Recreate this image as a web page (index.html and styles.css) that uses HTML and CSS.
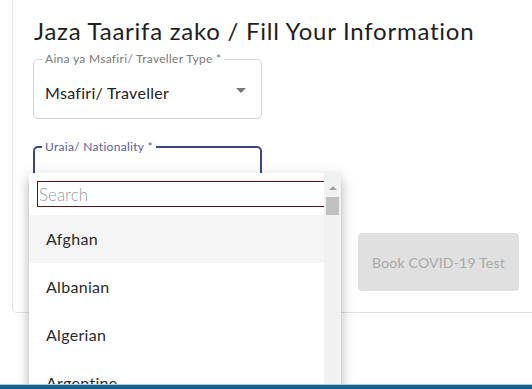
FILE: index.html
```html
<!DOCTYPE html>
<html lang="en">
<head>
  <meta charset="UTF-8">
  <meta name="viewport" content="width=device-width, initial-scale=1.0">
  <title>Fill Your Information</title>
  <link rel="stylesheet" href="styles.css">
</head>
<body>
  <div class="card">
    <h2 class="title">Jaza Taarifa zako / Fill Your Information</h2>
    <form class="form">
      <fieldset class="field">
        <legend>Aina ya Msafiri/ Traveller Type *</legend>
        <div class="value">Msafiri/ Traveller</div>
        <span class="arrow"></span>
      </fieldset>
      <fieldset class="field focused">
        <legend>Uraia/ Nationality *</legend>
        <div class="value"></div>
      </fieldset>
      <button type="button" class="book" disabled>Book COVID-19 Test</button>
    </form>
  </div>

  <!-- dropdown menu for nationality -->
  <div class="menu">
    <div class="menu-list">
      <div class="search-wrap">
        <input class="search" type="text" placeholder="Search">
      </div>
      <ul class="options">
        <li class="active">Afghan</li>
        <li>Albanian</li>
        <li>Algerian</li>
        <li>Argentine</li>
      </ul>
    </div>
    <div class="scrollbar">
      <span class="scroll-up"></span>
      <span class="thumb"></span>
    </div>
  </div>

  <div class="footer"></div>
</body>
</html>
```

FILE: styles.css
```css
* {
  margin: 0;
  padding: 0;
  box-sizing: border-box;
}
html, body {
  overflow: hidden;
}
body {
  font-family: Lato, "Noto Sans", sans-serif;
  color: #222;
  background: #fff;
  height: 389px;
}
.card {
  margin-left: 12px;
  width: 600px;
  border: 1px solid #e2e2e2;
  border-top: none;
  border-radius: 0 0 0 5px;
  padding: 17px 20px 21px 20px;
}
.title {
  font-size: 24px;
  line-height: 28px;
  font-weight: 400;
  letter-spacing: 0.75px;
  color: #1e1e1e;
  margin-left: 1px;
}
.form {
  display: grid;
  grid-template-columns: 229px 161px;
  grid-template-rows: 67px 67px 63px;
  column-gap: 96px;
  row-gap: 21px;
  margin-top: 7px;
}
.field {
  grid-column: 1;
  position: relative;
  border: 1px solid #d4d4d4;
  border-radius: 5px;
  padding: 0 8px;
  height: 67px;
}
.field legend {
  font-size: 12px;
  line-height: 14px;
  letter-spacing: 0.3px;
  color: #7a7a7a;
  padding: 0 3px;
}
.field .value {
  font-size: 16px;
  line-height: 20px;
  letter-spacing: 0.3px;
  padding: 17px 3px 0;
  color: #222;
}
.arrow {
  position: absolute;
  right: 15px;
  top: 22px;
  width: 0;
  height: 0;
  border-left: 5px solid transparent;
  border-right: 5px solid transparent;
  border-top: 5px solid #777;
}
.field.focused {
  border: 2px solid #3a4687;
  padding: 0 7px;
}
.field.focused legend {
  color: #56629c;
}
.book {
  grid-column: 2;
  grid-row: 3;
  margin-top: 5px;
  border: none;
  border-radius: 4px;
  background: #e0e0e0;
  color: #a8a8a8;
  font-family: Lato, "Noto Sans", sans-serif;
  font-size: 14px;
  letter-spacing: 0.2px;
}
.menu {
  position: absolute;
  left: 29px;
  top: 173px;
  width: 312px;
  height: 260px;
  display: flex;
  background: #fff;
  border-radius: 4px;
  box-shadow: 0 5px 5px -3px rgba(0,0,0,.2), 0 8px 10px 1px rgba(0,0,0,.14), 0 3px 14px 2px rgba(0,0,0,.12);
}
.menu-list {
  flex: 1;
  overflow: hidden;
}
.search-wrap {
  padding: 8px 0 8px 8px;
}
.search {
  display: block;
  width: 300px;
  height: 26px;
  border: 1px solid #5b1717;
  font-family: Lato, "Noto Sans", sans-serif;
  font-size: 17px;
  padding: 0 1px;
  color: #333;
}
.search::placeholder {
  color: #9a9a9a;
  font-weight: 300;
}
.options {
  list-style-type: none;
}
.options li {
  height: 48px;
  line-height: 48px;
  padding-left: 17px;
  font-size: 16px;
  letter-spacing: 0.3px;
  color: #2a2a2a;
}
.options li.active {
  background: #f5f5f5;
}
.scrollbar {
  width: 17px;
  background: #f1f1f1;
  display: flex;
  flex-direction: column;
  align-items: center;
}
.scroll-up {
  height: 17px;
  width: 0;
  border-left: 4px solid transparent;
  border-right: 4px solid transparent;
  border-bottom: 4px solid #a3a3a3;
  border-top: 6px solid transparent;
}
.thumb {
  width: 13px;
  height: 18px;
  margin-top: 7px;
  background: #c1c1c1;
}
.footer {
  position: relative;
  z-index: 2;
  margin-top: 71px;
  height: 5px;
  border-top: 1px solid #a8cbe4;
  background: #17618f;
}
```
